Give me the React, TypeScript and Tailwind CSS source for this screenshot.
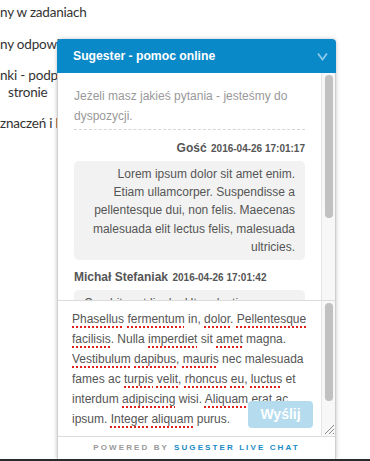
import React from "react";

const Sp = ({ children }: { children: React.ReactNode }) => (
  <span className="underline decoration-dotted decoration-[#e0201b] decoration-2 underline-offset-[3px]">{children}</span>
);

export default function App() {
  return (
    <div className="relative w-[370px] h-[461px] overflow-hidden bg-white">
      {/* background page */}
      <div className="pt-[4px] text-[13.5px] leading-[17px] text-[#333] tracking-[-0.2px]" style={{ fontFamily: "Lato, 'Noto Sans', sans-serif" }}>
        <div className="h-[17px]">ny w zadaniach</div>
        <div className="mt-[15px] h-[17px]">ny odpowiedzi do zadań</div>
        <div className="mt-[14px] h-[17px]">nki - podpowiedzi na</div>
        <div className="pl-[8px] h-[17px]">stronie</div>
        <div className="mt-[14px] h-[17px]">znaczeń i kategorii</div>
      </div>

      {/* widget */}
      <div
        className="absolute left-[57px] top-[39px] w-[279px] h-[420px] flex flex-col bg-white rounded-t-[5px] border-x border-[#cfcfcf] shadow-[0_0_4px_rgba(0,0,0,0.25)]"
        style={{ fontFamily: "'Liberation Sans', Arial, sans-serif" }}
      >
        <div className="h-[34px] flex items-center justify-between bg-[#0a89c9] rounded-t-[4px] pl-[16px] pr-[8px] -mx-px">
          <span className="text-white font-bold text-[12.2px]">Sugester - pomoc online</span>
          <svg width="11" height="9" viewBox="0 0 11 9" className="mt-[1px]">
            <path d="M1 1.5 L5.5 7.5 L10 1.5" fill="none" stroke="#8ccbec" strokeWidth="1.8" />
          </svg>
        </div>

        {/* messages */}
        <div className="h-[227px] flex overflow-hidden">
          <div className="flex-1 pl-[16px] pr-[16px] overflow-hidden">
            <div className="pt-[13px] text-[12px] leading-[20px] text-[#999]">
              Jeżeli masz jakieś pytania - jesteśmy do dyspozycji.
            </div>
            <div className="mt-[3px] border-t border-dashed border-[#d5d5d5]" />
            <div className="mt-[9px] text-right font-bold text-[#555] leading-[16px]">
              <span className="text-[12px]">Gość</span> <span className="text-[10px]">2016-04-26 17:01:17</span>
            </div>
            <div className="mt-[4px] bg-[#f2f2f2] rounded-[5px] px-[10px] py-[4px] text-right text-[12px] leading-[18.2px] text-[#555]">
              Lorem ipsum dolor sit amet enim.<br />Etiam ullamcorper. Suspendisse a<br />pellentesque dui, non felis. Maecenas<br />malesuada elit lectus felis, malesuada<br />ultricies.
            </div>
            <div className="mt-[8px] font-bold text-[#555] leading-[16px]">
              <span className="text-[12px]">Michał Stefaniak</span> <span className="text-[10px]">2016-04-26 17:01:42</span>
            </div>
            <div className="mt-[4px] bg-[#f2f2f2] rounded-[5px] px-[10px] py-[4px] text-[12px] leading-[18.2px] text-[#555]">
              Curabitur et ligula. Ut molestie a, ultricies porta urna.
            </div>
          </div>
          <div className="w-[14px] bg-[#f7f7f7] border-l border-[#e6e6e6] pt-[2px] flex justify-center">
            <div className="w-[8px] h-[143px] rounded-full bg-[#c1c1c1]" />
          </div>
        </div>

        {/* textarea */}
        <div className="relative h-[136px] flex border-t border-[#dcdcdc]">
          <div className="flex-1 pl-[14px] pt-[8px] text-[12px] leading-[20px] text-[#555] whitespace-nowrap">
            <div><Sp>Phasellus</Sp> <Sp>fermentum</Sp> in, <Sp>dolor</Sp>. <Sp>Pellentesque</Sp></div>
            <div><Sp>facilisis</Sp>. Nulla <Sp>imperdiet</Sp> sit <Sp>amet</Sp> magna.</div>
            <div><Sp>Vestibulum</Sp> <Sp>dapibus</Sp>, <Sp>mauris</Sp> nec malesuada</div>
            <div>fames ac <Sp>turpis</Sp> <Sp>velit</Sp>, <Sp>rhoncus</Sp> <Sp>eu</Sp>, <Sp>luctus</Sp> et</div>
            <div>interdum <Sp>adipiscing</Sp> wisi. <Sp>Aliquam</Sp> erat ac</div>
            <div>ipsum. <Sp>Integer</Sp> <Sp>aliquam</Sp> purus.</div>
          </div>
          <div className="w-[14px] bg-[#f7f7f7] border-l border-[#e6e6e6] flex flex-col items-center pt-[2px]">
            <div className="w-[8px] h-[98px] rounded-full bg-[#c1c1c1]" />
            <div className="flex-1" />
            <svg width="13" height="13" viewBox="0 0 13 13" className="mb-[1px]">
              <path d="M12 3 L3 12 M12 7 L7 12 M12 11 L11 12" stroke="#8a8a8a" strokeWidth="1" />
            </svg>
          </div>
          <button className="absolute left-[190px] top-[100px] w-[65px] h-[27px] rounded-[4px] bg-[#b4dcee] text-white font-bold text-[14px]">
            Wyślij
          </button>
        </div>

        {/* footer */}
        <div className="flex-1 border-t border-[#dcdcdc] flex items-center justify-center text-[8px] font-bold tracking-[2.1px]">
          <span className="text-[#9a9a9a]">POWERED BY</span>
          <span className="ml-[5px] text-[#1a8ac6]">SUGESTER LIVE CHAT</span>
        </div>
      </div>

      <div className="absolute left-0 top-[459px] w-full h-[2px] bg-[#2a2a2a]" />
    </div>
  );
}
